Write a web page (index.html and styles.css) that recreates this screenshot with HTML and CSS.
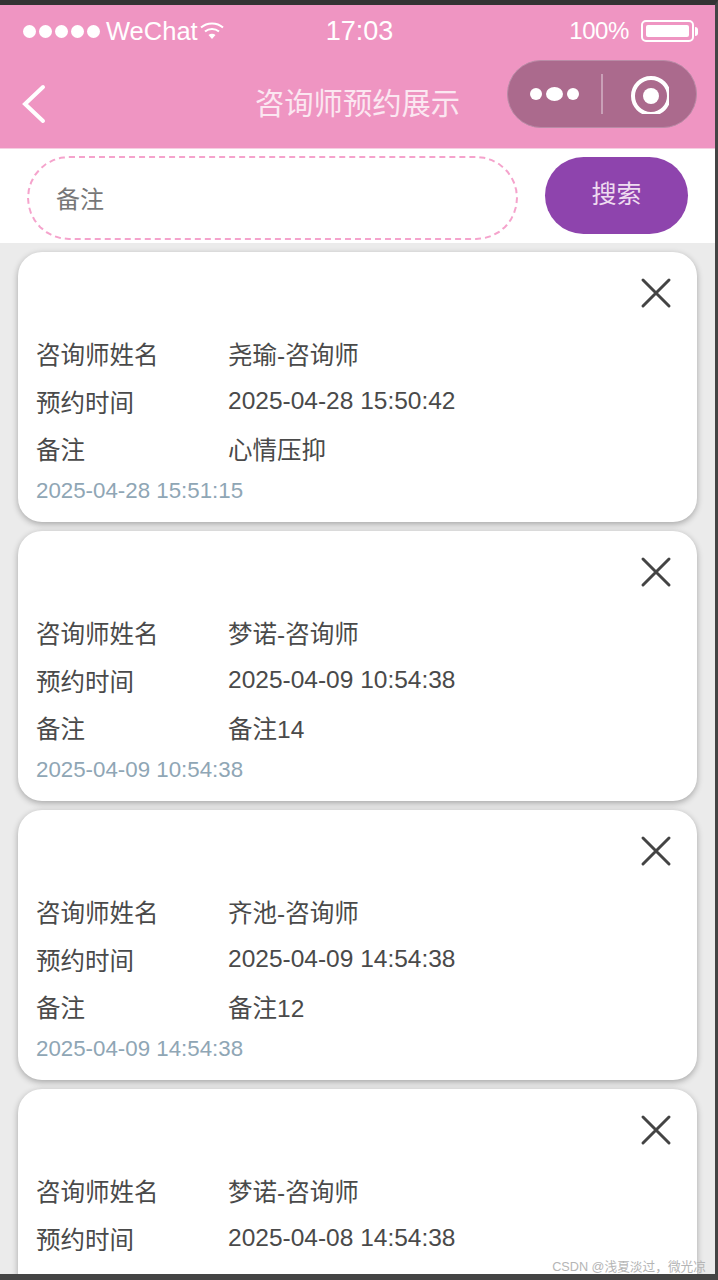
FILE: index.html
```html
<!DOCTYPE html>
<html>
<head>
	<meta charset="utf-8">
	<title>咨询师预约展示</title>
	<link rel="stylesheet" href="styles.css">
</head>
<body>
	<div class="frame">
		<div class="header">
			<div class="status">
				<div class="status-left">
					<span class="signal"><i></i><i></i><i></i><i></i><i></i></span>
					<span class="carrier">WeChat</span>
					<svg class="wifi" width="26" height="20" viewBox="0 0 24 20"><g fill="none" stroke="#fff" stroke-width="2"><path d="M1 6.500C7 1 17 1 23 6.500"/><path d="M5 10.500C9 7 15 7 19 10.500"/></g><path d="M8.500 14C10.500 12.300 13.500 12.300 15.500 14L12 18Z" fill="#fff"/></svg>
				</div>
				<div class="clock">17:03</div>
				<div class="status-right">
					<span class="percent">100%</span>
					<span class="battery"><b></b></span>
					<span class="battery-tip"></span>
				</div>
			</div>
			<div class="nav">
				<svg class="back" width="26" height="40" viewBox="0 0 26 40"><path d="M22 3L4 20L22 37" fill="none" stroke="#fff" stroke-width="4" stroke-linecap="round"/></svg>
				<div class="title">咨询师预约展示</div>
				<div class="capsule">
					<span class="dots"><i></i><i class="big"></i><i></i></span>
					<span class="divider"></span>
					<svg class="target" width="39" height="39" viewBox="0 0 39 39"><circle cx="21" cy="21" r="18" fill="none" stroke="#fff" stroke-width="4"/><circle cx="21" cy="21" r="8" fill="#fff"/></svg>
				</div>
			</div>
		</div>

		<div class="search">
			<div class="search-input">备注</div>
			<div class="search-btn">搜索</div>
		</div>

		<div class="list">
			<div class="card">
				<div class="card-top"><svg class="close" width="32" height="32" viewBox="0 0 32 32"><path d="M3 3L29 29M29 3L3 29" stroke="#444" stroke-width="3" stroke-linecap="round"/></svg></div>
				<div class="row"><span class="label">咨询师姓名</span><span>尧瑜-咨询师</span></div>
				<div class="row"><span class="label">预约时间</span><span>2025-04-28 15:50:42</span></div>
				<div class="row"><span class="label">备注</span><span>心情压抑</span></div>
				<div class="stamp">2025-04-28 15:51:15</div>
			</div>
			<div class="card">
				<div class="card-top"><svg class="close" width="32" height="32" viewBox="0 0 32 32"><path d="M3 3L29 29M29 3L3 29" stroke="#444" stroke-width="3" stroke-linecap="round"/></svg></div>
				<div class="row"><span class="label">咨询师姓名</span><span>梦诺-咨询师</span></div>
				<div class="row"><span class="label">预约时间</span><span>2025-04-09 10:54:38</span></div>
				<div class="row"><span class="label">备注</span><span>备注14</span></div>
				<div class="stamp">2025-04-09 10:54:38</div>
			</div>
			<div class="card">
				<div class="card-top"><svg class="close" width="32" height="32" viewBox="0 0 32 32"><path d="M3 3L29 29M29 3L3 29" stroke="#444" stroke-width="3" stroke-linecap="round"/></svg></div>
				<div class="row"><span class="label">咨询师姓名</span><span>齐池-咨询师</span></div>
				<div class="row"><span class="label">预约时间</span><span>2025-04-09 14:54:38</span></div>
				<div class="row"><span class="label">备注</span><span>备注12</span></div>
				<div class="stamp">2025-04-09 14:54:38</div>
			</div>
			<div class="card">
				<div class="card-top"><svg class="close" width="32" height="32" viewBox="0 0 32 32"><path d="M3 3L29 29M29 3L3 29" stroke="#444" stroke-width="3" stroke-linecap="round"/></svg></div>
				<div class="row"><span class="label">咨询师姓名</span><span>梦诺-咨询师</span></div>
				<div class="row"><span class="label">预约时间</span><span>2025-04-08 14:54:38</span></div>
			</div>
		</div>

		<div class="watermark">CSDN @浅夏淡过，微光凉</div>
	</div>
</body>
</html>
```

FILE: styles.css
```css
* {
	box-sizing: border-box;
}
html, body {
	margin: 0;
	height: 100%;
	overflow: hidden;
}
body {
	font-family: "Liberation Sans", "Noto Sans CJK SC", sans-serif;
	color: #444;
	background: #333;
}
.frame {
	position: relative;
	width: 718px;
	height: 1280px;
	display: flex;
	flex-direction: column;
	overflow: hidden;
	background: #ebebeb;
	border-top: 5px solid #333;
	border-right: 3px solid #444;
	border-bottom: 6px solid #444;
}

.header {
	height: 144px;
	flex: none;
	background: #ef95c2;
	color: #fff;
	border-bottom: 1px solid #f6cfe2;
}
.status {
	height: 52px;
	display: grid;
	grid-template-columns: 1fr auto 1fr;
	align-items: center;
	padding: 0 17px 0 23px;
	font-size: 25.500px;
}
.status-left, .status-right {
	display: flex;
	align-items: center;
}
.status-right {
	justify-content: flex-end;
}
.signal {
	display: flex;
	gap: 3px;
	margin-right: 6px;
}
.signal i {
	width: 13px;
	height: 13px;
	border-radius: 50%;
	background: #fff;
}
.wifi {
	margin-left: 1px;
}
.clock {
	font-size: 27px;
	margin-right: 2px;
}
.percent {
	font-size: 24px;
	letter-spacing: -0.4px;
	margin-right: 12px;
}
.battery {
	width: 53px;
	height: 22px;
	padding: 3px;
	border: 2px solid #fff;
	border-radius: 5px;
}
.battery b {
	display: block;
	height: 100%;
	background: #fff;
	border-radius: 2px;
}
.battery-tip {
	width: 3px;
	height: 9px;
	margin-left: 1px;
	background: #fff;
	border-radius: 0 3px 3px 0;
}

.nav {
	position: relative;
	height: 91px;
	display: flex;
	align-items: center;
	padding: 3px 18px 0 21px;
	justify-content: space-between;
}
.title {
	position: absolute;
	left: 255px;
	top: 27px;
	font-size: 29.300px;
	line-height: 40px;
	color: #fbe7f1;
}
.capsule {
	width: 190px;
	height: 68px;
	margin-top: -20px;
	display: flex;
	align-items: center;
	padding-left: 22px;
	background: #ab6a8d;
	border: 1px solid #b98ba6;
	border-radius: 34px;
}
.dots {
	display: flex;
	align-items: center;
	gap: 4px;
}
.dots i {
	width: 12px;
	height: 12px;
	border-radius: 50%;
	background: #fff;
}
.dots i.big {
	width: 17px;
	height: 14px;
}
.divider {
	width: 2px;
	height: 40px;
	margin-left: 22px;
	background: #c9a0b7;
}
.target {
	margin-left: 27px;
}

.search {
	height: 94px;
	flex: none;
	display: flex;
	align-items: center;
	padding: 0 27px;
	background: #fff;
}
.search-input {
	width: 491px;
	height: 84px;
	margin-top: 3px;
	display: flex;
	align-items: center;
	padding-left: 27px;
	font-size: 24px;
	color: #777;
	border: 2px dashed #f5a3cc;
	border-radius: 42px;
}
.search-btn {
	width: 143px;
	height: 77px;
	margin-left: 27px;
	margin-bottom: 1px;
	display: flex;
	align-items: center;
	justify-content: center;
	padding-bottom: 8px;
	font-size: 25px;
	color: #eedcf0;
	background: #8e44ad;
	border-radius: 39px;
}

.list {
	flex: 1;
	min-height: 0;
	display: flex;
	flex-direction: column;
	gap: 9px;
	padding: 9px 18px 0 18px;
	overflow: hidden;
}
.card {
	flex: none;
	height: 270px;
	padding: 0 18px;
	background: #fff;
	border-radius: 24px;
	box-shadow: 0 2px 6px rgba(0, 0, 0, 0.3);
}
.card-top {
	height: 78px;
	display: flex;
	justify-content: flex-end;
	padding: 25px 7px 0 0;
}
.row {
	height: 47.500px;
	display: flex;
	align-items: center;
	font-size: 24.500px;
	color: #4a4a4a;
}
.label {
	width: 192px;
}
.stamp {
	margin-top: 2px;
	font-size: 22.300px;
	line-height: 32px;
	color: #8fa6b5;
}

.watermark {
	position: absolute;
	right: 9px;
	bottom: -1px;
	font-size: 12.700px;
	color: #b5b5b5;
}
```
